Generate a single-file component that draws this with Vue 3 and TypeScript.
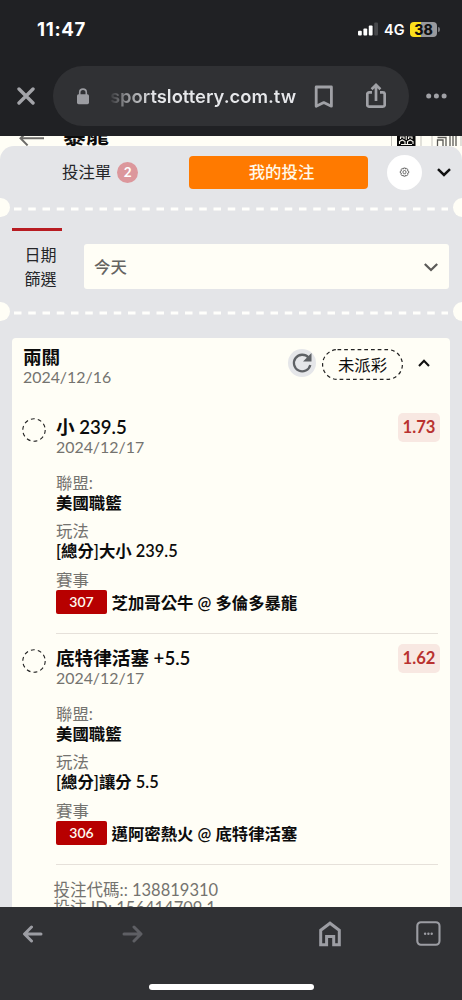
<script setup lang="ts">
interface Leg {
  pick: string
  date: string
  odds: string
  league: string
  market: string
  code: string
  match: string
}

const legs: Leg[] = [
  {
    pick: '小 239.5',
    date: '2024/12/17',
    odds: '1.73',
    league: '美國職籃',
    market: '[總分]大小 239.5',
    code: '307',
    match: '芝加哥公牛 @ 多倫多暴龍',
  },
  {
    pick: '底特律活塞 +5.5',
    date: '2024/12/17',
    odds: '1.62',
    league: '美國職籃',
    market: '[總分]讓分 5.5',
    code: '306',
    match: '邁阿密熱火 @ 底特律活塞',
  },
]
</script>

<template>
  <div class="phone">
    <header class="chrome">
      <div class="status">
        <span class="clock">11:47</span>
        <div class="status-right">
          <svg width="20" height="14" viewBox="0 0 20 14">
            <rect x="0" y="8.8" width="3.8" height="4.6" rx="1" fill="#fff" />
            <rect x="5.4" y="6.4" width="3.8" height="7" rx="1" fill="#fff" />
            <rect x="10.8" y="3.4" width="3.8" height="10" rx="1" fill="#fff" />
            <rect x="16.2" y="0.4" width="3.8" height="13" rx="1" fill="#47484b" />
          </svg>
          <span class="net">4G</span>
          <div class="battery"><span>38</span></div>
          <i class="battery-tip"></i>
        </div>
      </div>
      <div class="toolbar">
        <svg class="close" width="18" height="18" viewBox="0 0 18 18">
          <path d="M2 2L16 16M16 2L2 16" stroke="#a3a4a9" stroke-width="3.4" stroke-linecap="round" />
        </svg>
        <div class="address">
          <svg class="lock" width="12" height="17" viewBox="0 0 12 17">
            <path d="M2.7 8V4.4a3.3 3.3 0 0 1 6.6 0V8" fill="none" stroke="#9b9ca1" stroke-width="1.6" />
            <rect x="0" y="6.2" width="12" height="10" rx="1.6" fill="#9b9ca1" />
          </svg>
          <span class="url">sportslottery.com.tw</span>
          <svg class="mark" width="20" height="24" viewBox="0 0 20 24">
            <path d="M2.2 2h15.2v19.2L9.8 17.6 2.2 21.2z" fill="none" stroke="#a0a1a6" stroke-width="2.8" stroke-linejoin="round" />
          </svg>
          <svg class="share" width="20" height="26" viewBox="0 0 20 26">
            <path d="M6 9.3H3.2a1.9 1.9 0 0 0-1.900 1.900v10.600a1.900 1.900 0 0 0 1.900 1.900h13.600a1.900 1.900 0 0 0 1.900-1.900V11.200a1.900 1.900 0 0 0-1.900-1.900H14M10 18V2.400M5.600 6.200L10 1.900l4.400 4.300" fill="none" stroke="#a0a1a6" stroke-width="2.7" />
          </svg>
        </div>
        <svg class="more" width="21" height="6" viewBox="0 0 21 6">
          <circle cx="2.7" cy="3" r="2.5" fill="#a0a1a6" />
          <circle cx="10.4" cy="3" r="2.5" fill="#a0a1a6" />
          <circle cx="18.1" cy="3" r="2.5" fill="#a0a1a6" />
        </svg>
      </div>
    </header>

    <main class="page">
      <div class="behind">
        <svg class="back" width="25" height="10" viewBox="0 0 25 10">
          <path d="M25 2.300H2M9-5L1.500 2.300 8.600 9.400" fill="none" stroke="#6c6b68" stroke-width="2" />
        </svg>
        <span class="team">暴龍</span>
        <svg class="tiles" width="71" height="10" viewBox="0 0 71 10">
          <path d="M.5 0v10M30 0v10M41 0v10M70 0v10" stroke="#c4c3bd" />
          <rect x="6" y="0" width="18.500" height="10" fill="#080808" />
          <path d="M9.500 3V1h3.500v2M17.500 3V1H21v2M8.500 8V5.500l2.700-1.500 2.800 1.500V8M16.500 8V5.500l2.700-1.500L22 5.500V8M15.200 0v4M10 8.500h11" stroke="#f7f6ef" stroke-width="1.100" fill="none" />
          <path d="M46.500 10V4H52v6M55 10V1.500H46.500M59 10V0M62 10V0M65 10V0" stroke="#5a5955" stroke-width="1.300" fill="none" />
        </svg>
      </div>

      <section class="sheet">
        <div class="tabs">
          <div class="tab"><span class="tab-name">投注單</span><span class="count">2</span></div>
          <div class="tab-active">我的投注</div>
          <div class="gear">
            <svg width="11" height="11" viewBox="0 0 11 11">
              <path d="M4.600 1h1.800l.3 1.100 1.100-.6 1.200 1.200-.5 1.100 1.200.4v1.800l-1.200.4.5 1.100-1.200 1.200-1.100-.6-.3 1.100H4.600l-.4-1.100-1.100.6-1.200-1.200.6-1.100L1.300 6V4.200l1.200-.4-.6-1.100 1.200-1.200 1.100.6z" fill="none" stroke="#4a4a4a" stroke-width=".8" />
              <circle cx="5.500" cy="5.100" r="1.600" fill="none" stroke="#4a4a4a" stroke-width=".8" />
            </svg>
          </div>
          <svg class="fold" width="14" height="9" viewBox="0 0 14 9">
            <path d="M1 1.200L7 7l6-5.800" fill="none" stroke="#111" stroke-width="2.500" />
          </svg>
        </div>

        <div class="tear"><i></i><svg height="4" width="434"><path d="M0 2H434" stroke="#fffffc" stroke-width="2.800" stroke-dasharray="7.500 6.750" /></svg><i></i></div>

        <div class="filter">
          <div class="filter-name">日期<br />篩選</div>
          <div class="select">
            <span>今天</span>
            <svg width="14" height="9" viewBox="0 0 14 9">
              <path d="M.8 1L7 7l6.200-6" fill="none" stroke="#5c5b59" stroke-width="2.300" />
            </svg>
          </div>
        </div>

        <div class="tear"><i></i><svg height="4" width="434"><path d="M0 2H434" stroke="#fffffc" stroke-width="2.800" stroke-dasharray="7.500 6.750" /></svg><i></i></div>

        <article class="card">
          <div class="card-head">
            <div class="card-title">
              <h2>兩關</h2>
              <p class="date">2024/12/16</p>
            </div>
            <div class="refresh">
              <svg width="22" height="22" viewBox="0 0 22 22">
                <path d="M17.500 5.600A8.300 8.300 0 1 0 19.300 13" fill="none" stroke="#5e6165" stroke-width="2.300" />
                <path d="M20.500 1v8.500h-8.500z" fill="#5e6165" />
              </svg>
            </div>
            <div class="state">
              <svg width="81" height="31" viewBox="0 0 81 31">
                <rect x=".6" y=".6" width="79.800" height="29.800" rx="14.900" fill="none" stroke="#222" stroke-width="1.200" stroke-dasharray="3.700 3" />
              </svg>
              <span>未派彩</span>
            </div>
            <svg class="up" width="12" height="8" viewBox="0 0 12 8">
              <path d="M1 7l5-5.200L11 7" fill="none" stroke="#111" stroke-width="2.100" />
            </svg>
          </div>

          <div v-for="leg in legs" :key="leg.code" class="leg">
            <svg class="ring" width="24" height="24" viewBox="0 0 24 24">
              <circle cx="12" cy="12" r="11.200" fill="none" stroke="#222" stroke-width="1.100" stroke-dasharray="3.900 3.140" />
            </svg>
            <div class="leg-body">
              <div class="leg-top">
                <div>
                  <h3>{{ leg.pick }}</h3>
                  <p class="date">{{ leg.date }}</p>
                </div>
                <span class="odds">{{ leg.odds }}</span>
              </div>
              <dl>
                <dt>聯盟:</dt>
                <dd>{{ leg.league }}</dd>
                <dt>玩法</dt>
                <dd>{{ leg.market }}</dd>
                <dt>賽事</dt>
                <dd class="match"><span class="code">{{ leg.code }}</span><span class="teams">{{ leg.match }}</span></dd>
              </dl>
            </div>
          </div>

          <div class="ids">
            <p>投注代碼:: 138819310</p>
            <p>投注 ID: 156414709.1</p>
          </div>
        </article>
      </section>
    </main>

    <footer class="nav">
      <div class="nav-icons">
        <svg class="n-back" width="22" height="18" viewBox="0 0 22 18">
          <path d="M19 9H3M9.500 2L2.500 9l7 7" fill="none" stroke="#9c9da3" stroke-width="3" stroke-linecap="round" stroke-linejoin="round" />
        </svg>
        <svg class="n-next" width="22" height="18" viewBox="0 0 22 18">
          <path d="M2 9h16M12 2l7 7-7 7" fill="none" stroke="#5e5f64" stroke-width="3" stroke-linecap="round" stroke-linejoin="round" />
        </svg>
        <svg class="n-home" width="22" height="26" viewBox="0 0 22 26">
          <path d="M1.700 9.200L11 2.200l9.300 7V23.700h-5.600V15.600H7.600v8.100H1.700z" fill="none" stroke="#9c9da3" stroke-width="3" />
        </svg>
        <svg class="n-tabs" width="26" height="26" viewBox="0 0 26 26">
          <rect x="1.300" y="1.300" width="22.200" height="22.400" rx="3.600" fill="none" stroke="#9c9da3" stroke-width="2.100" />
          <circle cx="9.100" cy="12.800" r="1.200" fill="#9c9da3" />
          <circle cx="12.400" cy="12.800" r="1.200" fill="#9c9da3" />
          <circle cx="15.700" cy="12.800" r="1.200" fill="#9c9da3" />
        </svg>
      </div>
      <i class="home-bar"></i>
    </footer>
  </div>
</template>

<style>
html,
body {
  margin: 0;
  background: #202124;
}
</style>

<style scoped>
* {
  box-sizing: border-box;
}
h2,
h3,
p,
dl,
dt,
dd {
  margin: 0;
}
svg {
  display: block;
  flex: none;
}
.phone {
  width: 462px;
  height: 1000px;
  overflow: hidden;
  display: flex;
  flex-direction: column;
  font-family: Lato, 'Noto Sans CJK TC', sans-serif;
  font-size: 16.4px;
  color: #0c0c0c;
  white-space: nowrap;
}
.chrome {
  height: 136px;
  flex: none;
  background: #202124;
  font-family: Inter, sans-serif;
}
.status {
  height: 66px;
  padding: 0 22px 8px 37px;
  display: flex;
  align-items: center;
  justify-content: space-between;
  color: #fff;
}
.clock {
  font-size: 18.6px;
  font-weight: 700;
  letter-spacing: 0.7px;
}
.status-right {
  display: flex;
  align-items: center;
}
.net {
  margin: 1px 0 0 6px;
  width: 26px;
  font-size: 14.5px;
  font-weight: 600;
}
.battery {
  width: 27px;
  height: 15px;
  border-radius: 4px;
  background: linear-gradient(90deg, #fbe01c 39%, #98999d 39%);
  color: #111;
  font-size: 14px;
  font-weight: 800;
  line-height: 15px;
  text-align: center;
}
.battery-tip {
  width: 2px;
  height: 5px;
  margin-left: 1px;
  border-radius: 0 2px 2px 0;
  background: #77787c;
}
.toolbar {
  display: flex;
  align-items: center;
  height: 60px;
}
.close {
  margin-left: 17px;
}
.address {
  width: 356px;
  height: 60px;
  margin-left: 18px;
  border-radius: 30px;
  background: #303134;
  display: flex;
  align-items: center;
}
.lock {
  margin-left: 24px;
}
.url {
  width: 188px;
  margin-left: 21px;
  font-size: 18.4px;
  font-weight: 600;
  color: transparent;
  background: linear-gradient(90deg, #37383b, #8b8c8f 8%, #e6e7ea 24%);
  background-clip: text;
  -webkit-background-clip: text;
}
.mark {
  margin: 1px 0 0 16px;
}
.share {
  margin: 0 0 0 32px;
}
.more {
  margin-left: 17px;
}
.page {
  height: 771px;
  flex: none;
  overflow: hidden;
  background: #fffef6;
}
.behind {
  height: 10px;
  overflow: hidden;
  display: flex;
  align-items: flex-start;
}
.back {
  margin-left: 19px;
}
.team {
  margin: -14px 0 0 19px;
  font-size: 23px;
  line-height: 25px;
  font-weight: 700;
}
.tiles {
  margin-left: 282px;
}
.sheet {
  height: 761px;
  background: #e4e5e8;
  border-radius: 14px 14px 0 0;
}
.tabs {
  display: flex;
  align-items: center;
  height: 52px;
}
.tab {
  width: 127px;
  margin-left: 62px;
  display: flex;
  align-items: center;
  color: #252629;
}
.tab-name {
  padding-bottom: 2px;
}
.count {
  width: 21px;
  height: 21px;
  margin-left: 6px;
  border-radius: 50%;
  background: #dc979c;
  color: #fff;
  font-size: 13.5px;
  font-weight: 700;
  line-height: 21px;
  text-align: center;
}
.tab-active {
  width: 179px;
  height: 33px;
  border-radius: 4px;
  background: #ff7a00;
  color: #fff8e8;
  font-weight: 500;
  line-height: 31px;
  padding-left: 6px;
  text-align: center;
}
.gear {
  width: 35px;
  height: 35px;
  margin-left: 19px;
  border-radius: 50%;
  background: #fff;
  display: grid;
  place-items: center;
}
.fold {
  margin: 1px 0 0 15px;
}
.tear {
  height: 20px;
  display: flex;
  align-items: center;
  overflow: hidden;
}
.tear i {
  width: 19px;
  height: 19px;
  flex: none;
  border-radius: 50%;
  background: #fffef6;
  margin: 0 0 1px -9.5px;
}
.tear svg {
  margin: 1px 0 0 4.5px;
}
.tear i:last-child {
  margin-left: 5px;
}
.filter {
  height: 84px;
  display: flex;
  padding: 10px 13px 0 12px;
}
.filter-name {
  width: 50px;
  height: 64px;
  margin-right: 22px;
  border-top: 3px solid #b81c22;
  padding: 12px 0 0 7px;
  text-align: center;
  font-size: 16px;
  line-height: 23.5px;
  color: #252629;
}
.select {
  width: 365px;
  height: 45px;
  margin-top: 16px;
  padding: 0 11px 0 10px;
  border-radius: 3px;
  background: #fffef6;
  display: flex;
  align-items: center;
  justify-content: space-between;
  color: #656462;
  font-weight: 500;
}
.select span {
  padding-bottom: 2px;
}
.select svg {
  margin-top: 1px;
}
.card {
  width: 438px;
  height: 600px;
  margin: 16px 0 0 12px;
  border-radius: 4px 4px 0 0;
  background: #fffef6;
}
.card-head {
  height: 64px;
  display: flex;
  padding-left: 11px;
}
.card-title {
  width: 265px;
  padding-top: 9px;
}
h2,
h3 {
  font-size: 18.6px;
  font-weight: 600;
  line-height: 20px;
}
.date {
  color: #74736f;
  font-size: 15.9px;
  line-height: 20px;
}
.refresh {
  width: 28px;
  height: 28px;
  margin-top: 11px;
  border-radius: 50%;
  background: #e5e6e9;
  display: grid;
  place-items: center;
}
.state {
  width: 81px;
  height: 31px;
  margin: 11px 0 0 6px;
  display: grid;
  place-items: center;
}
.state > * {
  grid-area: 1 / 1;
}
.state span {
  padding-bottom: 2px;
}
.up {
  margin: 21px 0 0 15px;
}
.leg {
  height: 231px;
  display: flex;
  padding-left: 10px;
}
.ring {
  margin-top: 16px;
}
.leg-body {
  width: 382px;
  height: 232px;
  margin-left: 10px;
  border-bottom: 1.5px solid #e6e1da;
  padding-top: 15px;
}
.leg-top {
  display: flex;
  justify-content: space-between;
  height: 56px;
}
.odds {
  width: 42px;
  height: 29px;
  margin: -4px -2px 0 0;
  border-radius: 5px;
  background: #f8e8e2;
  color: #b9322f;
  font-size: 16.6px;
  font-weight: 700;
  line-height: 29px;
  text-align: center;
}
dt {
  color: #74736f;
  line-height: 20px;
}
dd {
  font-weight: 600;
  line-height: 20px;
  margin-bottom: 8.3px;
}
.match {
  display: flex;
  align-items: center;
  line-height: 24px;
}
.teams {
  padding-top: 1px;
}
.code {
  width: 51px;
  height: 24px;
  margin-right: 4.5px;
  border-radius: 2px;
  background: #b70000;
  color: #fffaf0;
  font-size: 14px;
  text-align: center;
}
.ids {
  padding: 17px 0 0 41.5px;
  color: #74736f;
  font-size: 16.5px;
}
.ids p {
  line-height: 18px;
}
.nav {
  height: 93px;
  flex: none;
  background: #303134;
}
.nav-icons {
  height: 53px;
  display: flex;
  align-items: center;
}
.n-back {
  margin-left: 22px;
}
.n-next {
  margin-left: 78px;
}
.n-home {
  margin-left: 175px;
}
.n-tabs {
  margin-left: 75px;
}
.home-bar {
  display: block;
  width: 165px;
  height: 6px;
  margin: 24px auto 0;
  border-radius: 3px;
  background: #fff;
}
</style>
